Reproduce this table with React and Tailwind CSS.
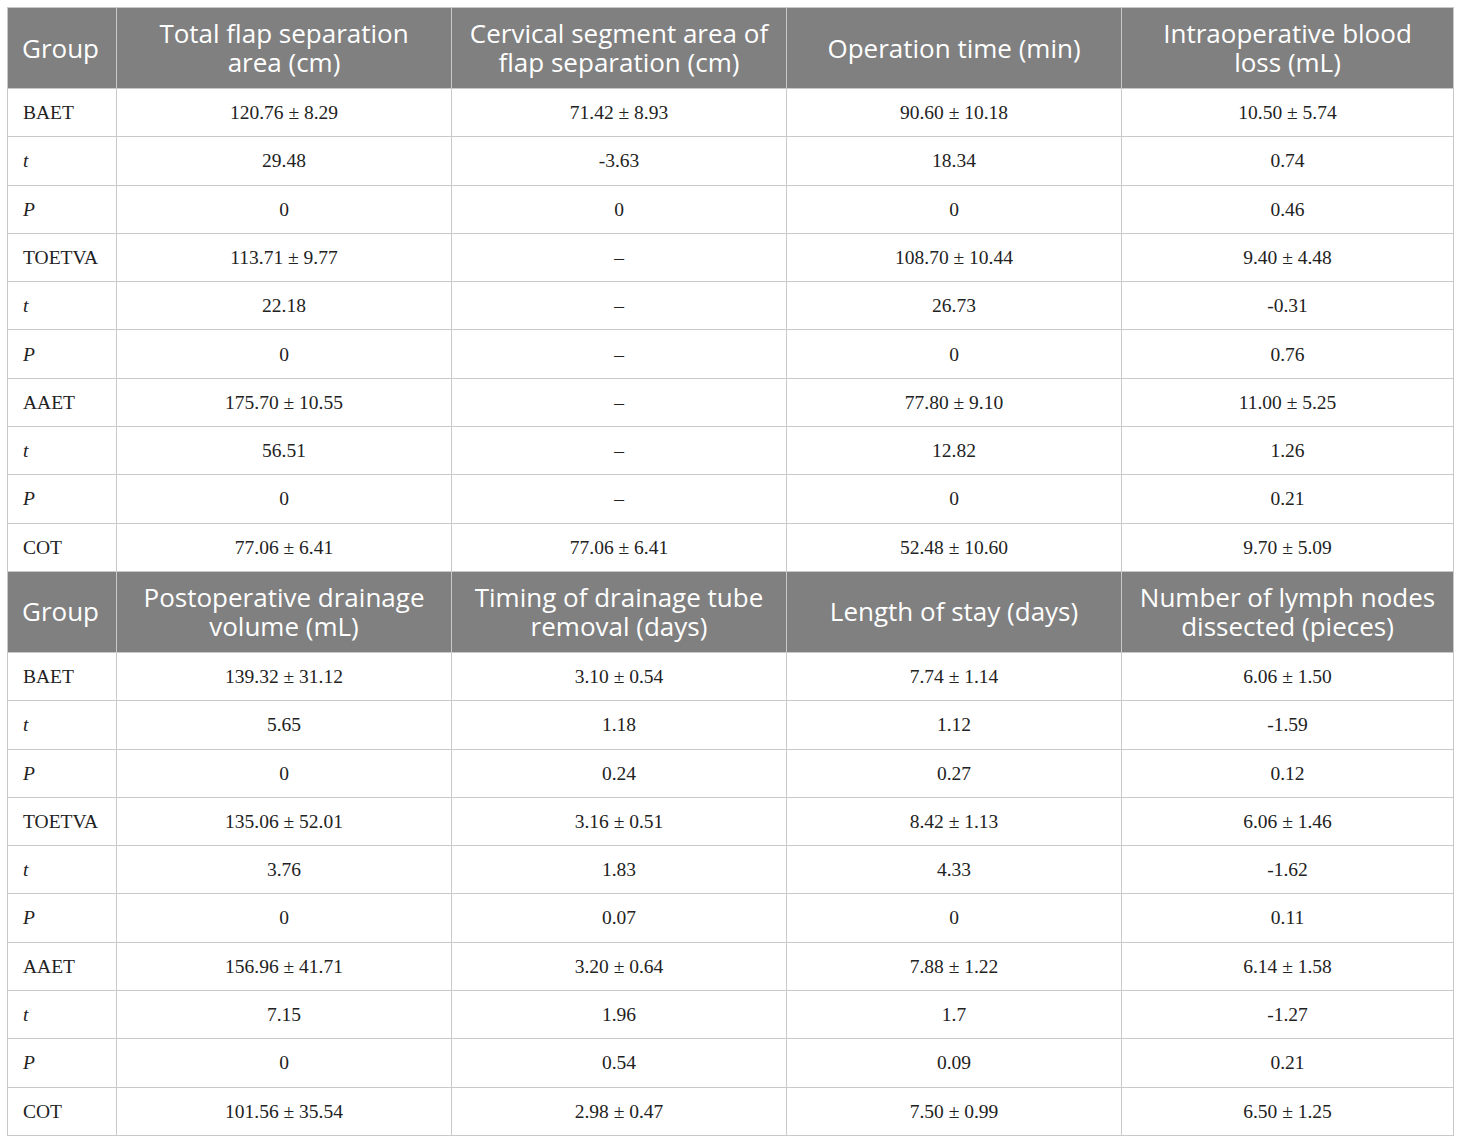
import { Fragment } from 'react'

const top = {
  head: ['Total flap separation area (cm)', 'Cervical segment area of flap separation (cm)', 'Operation time (min)', 'Intraoperative blood loss (mL)'],
  rows: [
    ['BAET', '120.76 ± 8.29', '71.42 ± 8.93', '90.60 ± 10.18', '10.50 ± 5.74'],
    ['t', '29.48', '-3.63', '18.34', '0.74'],
    ['P', '0', '0', '0', '0.46'],
    ['TOETVA', '113.71 ± 9.77', '–', '108.70 ± 10.44', '9.40 ± 4.48'],
    ['t', '22.18', '–', '26.73', '-0.31'],
    ['P', '0', '–', '0', '0.76'],
    ['AAET', '175.70 ± 10.55', '–', '77.80 ± 9.10', '11.00 ± 5.25'],
    ['t', '56.51', '–', '12.82', '1.26'],
    ['P', '0', '–', '0', '0.21'],
    ['COT', '77.06 ± 6.41', '77.06 ± 6.41', '52.48 ± 10.60', '9.70 ± 5.09'],
  ],
}

const bottom = {
  head: ['Postoperative drainage volume (mL)', 'Timing of drainage tube removal (days)', 'Length of stay (days)', 'Number of lymph nodes dissected (pieces)'],
  rows: [
    ['BAET', '139.32 ± 31.12', '3.10 ± 0.54', '7.74 ± 1.14', '6.06 ± 1.50'],
    ['t', '5.65', '1.18', '1.12', '-1.59'],
    ['P', '0', '0.24', '0.27', '0.12'],
    ['TOETVA', '135.06 ± 52.01', '3.16 ± 0.51', '8.42 ± 1.13', '6.06 ± 1.46'],
    ['t', '3.76', '1.83', '4.33', '-1.62'],
    ['P', '0', '0.07', '0', '0.11'],
    ['AAET', '156.96 ± 41.71', '3.20 ± 0.64', '7.88 ± 1.22', '6.14 ± 1.58'],
    ['t', '7.15', '1.96', '1.7', '-1.27'],
    ['P', '0', '0.54', '0.09', '0.21'],
    ['COT', '101.56 ± 35.54', '2.98 ± 0.47', '7.50 ± 0.99', '6.50 ± 1.25'],
  ],
}

function Section({ data }) {
  return (
    <Fragment>
      <tr className="h-[81px] bg-[#7f807f] text-white font-['Open_Sans',sans-serif]">
        <th className="border border-[#c9c9c9] pl-[14px] text-left font-normal text-[26px] leading-[29px]">Group</th>
        {data.head.map((h) => (
          <th key={h} className="border border-[#c9c9c9] px-4 text-center font-normal text-[26px] leading-[29px]">{h}</th>
        ))}
      </tr>
      {data.rows.map((r, i) => (
        <tr key={i} className="h-[48.3px]">
          <td className={`border border-[#c9c9c9] pl-[15px] text-left ${r[0].length === 1 ? 'italic' : ''}`}>{r[0]}</td>
          {r.slice(1).map((c, j) => (
            <td key={j} className="border border-[#c9c9c9] text-center">{c}</td>
          ))}
        </tr>
      ))}
    </Fragment>
  )
}

export default function App() {
  return (
    <div className="min-h-screen bg-white px-[7px] pt-[7px]">
      <table className="w-[1447px] table-fixed border-collapse text-[19.5px] text-[#222] font-['Liberation_Serif',serif]">
        <colgroup>
          <col className="w-[109px]" />
          <col className="w-[335px]" />
          <col className="w-[335px]" />
          <col className="w-[335px]" />
          <col />
        </colgroup>
        <tbody>
          <Section data={top} />
          <Section data={bottom} />
        </tbody>
      </table>
    </div>
  )
}
